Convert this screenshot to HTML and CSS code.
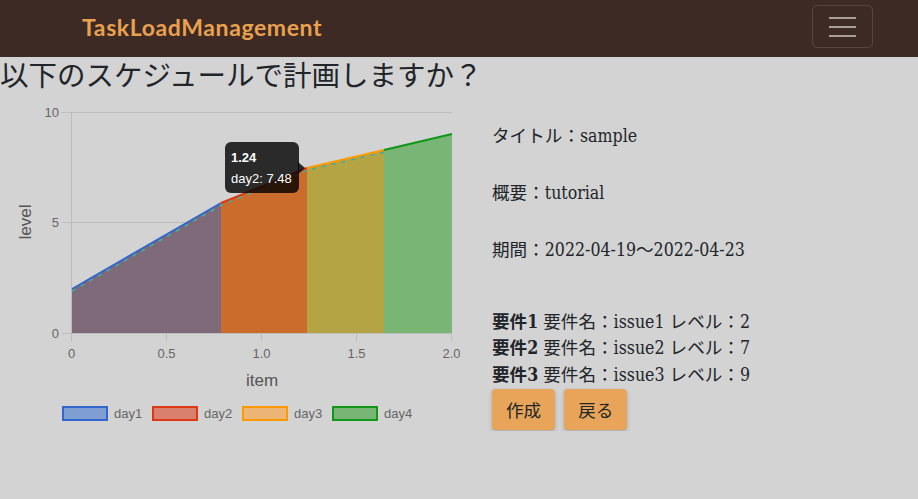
FILE: index.html
```html
<!DOCTYPE html>
<html lang="ja">
<head>
<meta charset="utf-8">
<title>TaskLoadManagement</title>
<link rel="stylesheet" href="styles.css">
</head>
<body>
<nav class="navbar">
  <a class="brand" href="#">TaskLoadManagement</a>
  <button class="toggler" type="button" aria-label="menu">
    <span class="bar"></span><span class="bar"></span><span class="bar"></span>
  </button>
</nav>
<main class="main">
  <h3 class="title">以下のスケジュールで計画しますか？</h3>
  <div class="content">
    <svg class="chart" width="460" height="340" viewBox="0 91 460 340" xmlns="http://www.w3.org/2000/svg">
      <!-- grid -->
      <g stroke="#bdbdbd" stroke-width="1">
        <line x1="62" y1="112.5" x2="452" y2="112.5"/>
        <line x1="62" y1="222.5" x2="452" y2="222.5"/>
        <line x1="62" y1="333.5" x2="452" y2="333.5"/>
        <line x1="71.5" y1="112" x2="71.5" y2="341"/>
        <line x1="166.5" y1="333" x2="166.5" y2="341"/>
        <line x1="261.5" y1="333" x2="261.5" y2="341"/>
        <line x1="356.5" y1="333" x2="356.5" y2="341"/>
        <line x1="451.5" y1="333" x2="451.5" y2="341"/>
      </g>
      <!-- fills -->
      <polygon points="72,333 72,289 221,203 221,333" fill="#7e6a79"/>
      <polygon points="221,333 221,203 307,168 307,333" fill="#cb6c2c"/>
      <polygon points="307,333 307,168 384,150 384,333" fill="#b5a443"/>
      <polygon points="384,333 384,150 452,134 452,333" fill="#79b574"/>
      <!-- dashed -->
      <polyline points="72,291 221,205 307,170 384,152" fill="none" stroke="#4fa99a" stroke-width="2" stroke-dasharray="4 6"/>
      <!-- lines -->
      <polyline points="72,289 221,203" fill="none" stroke="#3366cc" stroke-width="2"/>
      <polyline points="221,203 307,168" fill="none" stroke="#dc3912" stroke-width="2"/>
      <polyline points="307,168 384,150" fill="none" stroke="#ff9900" stroke-width="2"/>
      <polyline points="384,150 452,134" fill="none" stroke="#109618" stroke-width="2"/>
      <!-- y labels -->
      <g class="tick" text-anchor="end">
        <text x="59" y="117">10</text>
        <text x="59" y="227">5</text>
        <text x="59" y="338">0</text>
      </g>
      <!-- x labels -->
      <g class="tick" text-anchor="middle">
        <text x="71.5" y="358">0</text>
        <text x="166.5" y="358">0.5</text>
        <text x="261.5" y="358">1.0</text>
        <text x="356.5" y="358">1.5</text>
        <text x="451.5" y="358">2.0</text>
      </g>
      <text class="axis-title" x="262" y="386" text-anchor="middle">item</text>
      <text class="axis-title" x="0" y="0" text-anchor="middle" transform="translate(31 222) rotate(-90)">level</text>
      <!-- legend -->
      <g stroke-width="2">
        <rect x="63" y="407" width="44" height="13" fill="#7f9fd3" stroke="#3366cc"/>
        <rect x="153" y="407" width="44" height="13" fill="#d9806f" stroke="#dc3912"/>
        <rect x="243" y="407" width="44" height="13" fill="#ecb576" stroke="#ff9900"/>
        <rect x="333" y="407" width="44" height="13" fill="#79b574" stroke="#109618"/>
      </g>
      <g class="legend">
        <text x="114" y="418">day1</text>
        <text x="204" y="418">day2</text>
        <text x="294" y="418">day3</text>
        <text x="384" y="418">day4</text>
      </g>
      <!-- tooltip -->
      <g class="tooltip">
        <rect x="225" y="142" width="74" height="51" rx="6" fill="rgba(0,0,0,0.8)"/>
        <polygon points="298,162 305,168 298,174" fill="rgba(0,0,0,0.8)"/>
        <text class="tt-title" x="231" y="161.5">1.24</text>
        <text class="tt-body" x="231" y="182.5">day2: 7.48</text>
      </g>
    </svg>
    <section class="info">
      <p class="field">タイトル：sample</p>
      <p class="field">概要：tutorial</p>
      <p class="field">期間：2022-04-19～2022-04-23</p>
      <div class="reqs">
        <div class="req"><b>要件1</b> 要件名：issue1 レベル：2</div>
        <div class="req"><b>要件2</b> 要件名：issue2 レベル：7</div>
        <div class="req"><b>要件3</b> 要件名：issue3 レベル：9</div>
      </div>
      <div class="actions">
        <button class="btn" type="button">作成</button>
        <button class="btn" type="button">戻る</button>
      </div>
    </section>
  </div>
</main>
</body>
</html>
```
FILE: styles.css
```css
html, body {
  margin: 0;
  padding: 0;
}
body {
  background: #d3d3d3;
  color: #212529;
  font-family: "Noto Sans CJK JP", sans-serif;
}
.navbar {
  height: 57px;
  background: #3d2a24;
  display: flex;
  align-items: center;
  justify-content: space-between;
  padding: 0 45px 4px 82px;
  box-sizing: border-box;
}
.brand {
  color: #e9a14f;
  font-family: Lato, "Open Sans", sans-serif;
  font-weight: 700;
  font-size: 23px;
  letter-spacing: 0.6px;
  text-decoration: none;
}
.toggler {
  width: 61px;
  height: 43px;
  border: 1px solid rgba(255, 255, 255, 0.13);
  border-radius: 5px;
  background: transparent;
  display: flex;
  flex-direction: column;
  align-items: center;
  justify-content: center;
  gap: 7px;
  padding: 0;
}
.bar {
  display: block;
  width: 27px;
  height: 2px;
  background: #a99e99;
}
.title {
  margin: 0;
  font-size: 28.5px;
  font-weight: 400;
  line-height: 34px;
  color: #212529;
}
.content {
  display: flex;
  align-items: flex-start;
}
.chart {
  display: block;
  flex: none;
}
.tick {
  font-family: "Liberation Sans", Arial, sans-serif;
  font-size: 13px;
  fill: #666;
}
.axis-title {
  font-family: "Liberation Sans", Arial, sans-serif;
  font-size: 17px;
  fill: #555;
}
.legend {
  font-family: "Liberation Sans", Arial, sans-serif;
  font-size: 13px;
  fill: #666;
}
.tt-title {
  font-family: "Liberation Sans", Arial, sans-serif;
  font-size: 13px;
  font-weight: 700;
  fill: #fff;
}
.tt-body {
  font-family: "Liberation Sans", Arial, sans-serif;
  font-size: 13px;
  fill: #fff;
}
.info {
  margin-left: 32px;
  padding-top: 32px;
  font-family: "DejaVu Serif Condensed", "Liberation Serif", "Noto Sans CJK JP", serif;
  font-size: 17.6px;
  line-height: 26.5px;
  color: #212529;
}
.field {
  margin: 0 0 30.5px 0;
}
.reqs {
  margin-top: 45px;
}
.req b {
  font-weight: 700;
}
.actions {
  display: flex;
  gap: 9px;
  margin-top: 1px;
}
.btn {
  height: 41px;
  padding: 0 14px;
  background: #e8a55a;
  border: none;
  border-radius: 4px;
  box-shadow: 0 2px 4px rgba(0, 0, 0, 0.22);
  font-family: "Noto Sans CJK JP", sans-serif;
  font-size: 17.6px;
  color: #212529;
}
```
